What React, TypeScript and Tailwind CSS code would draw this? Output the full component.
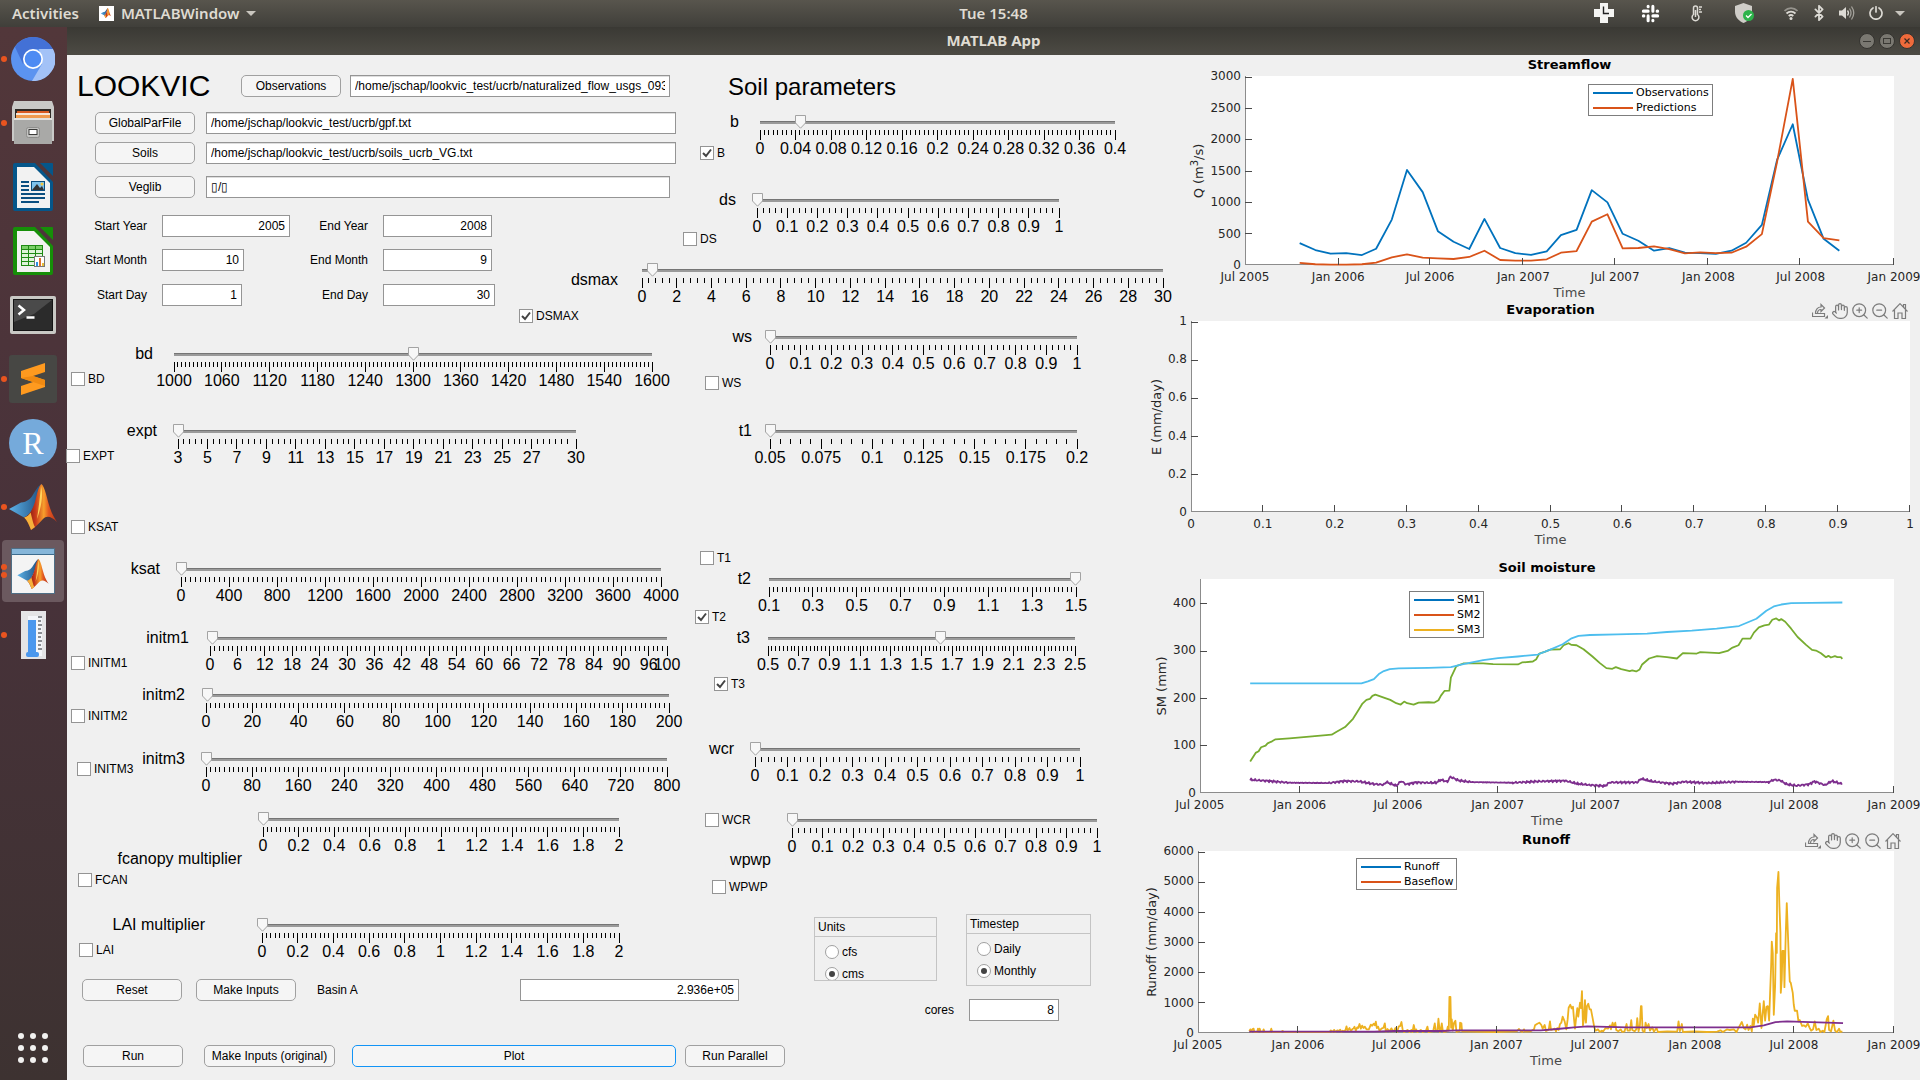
import { useId, useState } from "react";
import type { ReactNode } from "react";
import { Bluetooth, Hand, ZoomIn, ZoomOut } from "lucide-react";

/* ------------------------------------------------------------------ */
/* Icons                                                               */
/* ------------------------------------------------------------------ */

function MatlabLogo({ className }: { className: string }) {
  const id = useId();
  return (
    <svg viewBox="0 0 48 46" className={className} aria-hidden="true">
      <defs>
        <linearGradient id={`${id}a`} x1="0" y1="0" x2="1" y2="0">
          <stop offset="0" stopColor="#5a0f0c" />
          <stop offset="0.35" stopColor="#c8391a" />
          <stop offset="0.6" stopColor="#f7a02c" />
          <stop offset="0.75" stopColor="#e2561f" />
          <stop offset="1" stopColor="#b5341a" />
        </linearGradient>
        <linearGradient id={`${id}b`} x1="0" y1="0" x2="1" y2="0">
          <stop offset="0" stopColor="#5db2e8" />
          <stop offset="1" stopColor="#1d4f80" />
        </linearGradient>
      </defs>
      <path d="M0 25 L12 18.500 C18 18 22 15 25 9 C28 4 30 1 32.500 0 L26 20 C23 27 20 32 15 33.500 Z" fill={`url(#${id}b)`} />
      <path d="M32.500 0 C36 3 38 15 41 24 C43 30 45.500 34 48 38 C43 33 38 31 34 35 C30 39 26 44 22 46 C20 41 18 36 15 33.500 C20 32 23 27 26 18 C28 10 29.500 2 32.500 0 Z" fill={`url(#${id}a)`} />
      <path d="M22 46 C20 41 18 36 15 33.500 C18 33 20 31 21.500 28.500 C23 33 24 40 26 43 Z" fill="#f6b13c" />
      <path d="M32 2 C35 12 31 27 28 35 C30 22 31 12 32 2 Z" fill="#ffd45c" />
    </svg>
  );
}

function ChromiumIcon() {
  return (
    <svg viewBox="0 0 44 44" className="size-11" aria-hidden="true">
      <circle cx="22" cy="22" r="22" fill="#5b93f0" />
      <path d="M22 0 A22 22 0 0 1 42 12 L22 12 L12 27 L4 10 A22 22 0 0 1 22 0 Z" fill="#4371d6" />
      <path d="M42 12 A22 22 0 0 1 21 44 L31 27 L28 12 Z" fill="#a3c2f7" />
      <circle cx="22" cy="22" r="10" fill="#fff" />
      <circle cx="22" cy="22" r="8.300" fill="#4e8bf3" />
    </svg>
  );
}

function FilesIcon() {
  return (
    <svg viewBox="0 0 42 44" className="h-11 w-[42px]" aria-hidden="true">
      <path d="M2 0 H40 L42 6 V40 H0 V6 Z" fill="#c9c9c7" />
      <rect x="3" y="8" width="36" height="12" fill="#2e2a26" />
      <rect x="5" y="10" width="32" height="3" fill="#d95b22" />
      <rect x="4" y="12" width="34" height="2" fill="#f6e6d8" />
      <rect x="4" y="14" width="34" height="5" fill="#f09a4e" />
      <rect x="2" y="17" width="38" height="26" fill="#a9a9a7" />
      <rect x="2" y="17" width="38" height="2" fill="#e2e2e0" />
      <rect x="14.500" y="26.500" width="13" height="10" rx="2" fill="#c4c4c2" stroke="#8e8e8c" />
      <rect x="17" y="28.500" width="8" height="5" fill="#fff" stroke="#3c3c3a" />
    </svg>
  );
}

function WriterIcon() {
  return (
    <svg viewBox="0 0 40 48" className="h-12 w-10" aria-hidden="true">
      <path d="M2 0 H22 L40 19 V46 Q40 48 38 48 H2 Q0 48 0 46 V2 Q0 0 2 0 Z" fill="#05568a" />
      <path d="M27 0 H39 Q40 0 40 1 V13 Z" fill="#05568a" />
      <path d="M4 4 H21 L37 20 V45 H4 Z" fill="#f2f2f2" />
      <path d="M8 19 h8 M8 23 h8 M8 27 h8 M8 31 h24 M8 35 h24 M8 39 h18" stroke="#0b4f80" strokeWidth="2" />
      <rect x="18.500" y="18.500" width="13" height="9" fill="#7fc3ec" stroke="#0b4f80" />
      <path d="M19 27 L24 21 L27 25 L29 23 L31 27 Z" fill="#333" />
      <circle cx="29" cy="21" r="1.500" fill="#f5c63c" />
    </svg>
  );
}

function CalcIcon() {
  return (
    <svg viewBox="0 0 40 48" className="h-12 w-10" aria-hidden="true">
      <path d="M2 0 H22 L40 19 V46 Q40 48 38 48 H2 Q0 48 0 46 V2 Q0 0 2 0 Z" fill="#168f08" />
      <path d="M27 0 H39 Q40 0 40 1 V13 Z" fill="#168f08" />
      <path d="M4 4 H21 L37 20 V45 H4 Z" fill="#f2f2f2" />
      <rect x="8.500" y="18.500" width="21" height="20" fill="#dff3da" stroke="#1f8a14" />
      <rect x="9" y="19" width="20" height="3" fill="#7ad068" />
      <path d="M15.500 18 V38 M22.500 18 V38 M8 22.500 H30 M8 26.500 H30 M8 30.500 H30 M8 34.500 H30" stroke="#1f8a14" />
      <rect x="21.500" y="29.500" width="10" height="10" fill="#fff" stroke="#777" />
      <path d="M24 39 v-4" stroke="#2f8fe0" strokeWidth="2" />
      <path d="M27 39 v-8" stroke="#e0702f" strokeWidth="2" />
      <path d="M30 39 v-3" stroke="#e8bd3a" strokeWidth="2" />
    </svg>
  );
}

function TerminalIcon() {
  return (
    <svg viewBox="0 0 46 38" className="h-[38px] w-[46px]" aria-hidden="true">
      <rect width="46" height="38" rx="2" fill="#c8c8c4" />
      <rect x="3.500" y="3.500" width="39" height="31" fill="#2b2b2b" stroke="#141414" />
      <path d="M4 4 H42 L24 18 L4 26 Z" fill="#4a4a4a" />
      <path d="M8.500 9.500 L14 14 L8.500 18.500" fill="none" stroke="#fff" strokeWidth="2.500" />
      <path d="M16.500 21.500 h8" stroke="#fff" strokeWidth="2.500" />
    </svg>
  );
}

function SublimeIcon() {
  return (
    <svg viewBox="0 0 48 48" className="size-12" aria-hidden="true">
      <rect width="48" height="48" rx="3" fill="#474744" />
      <path d="M36 8 V17 L24 21 L36 25 V32 L12 40 V31 L24 27 L12 23 V16 Z" fill="#ff9a1f" />
      <path d="M24 21 L36 25 V31 L24 27 L12 23 Z" fill="#f08a12" />
    </svg>
  );
}

function MatlabWindowIcon() {
  return (
    <span className="flex h-[46px] w-11 flex-col border border-[#4f6f86] bg-[#f4f4f4]">
      <span className="h-1.5 border-b border-[#3d6c8e] bg-[#86b6d9]" />
      <span className="flex flex-1 items-center justify-center">
        <MatlabLogo className="h-[30px] w-8" />
      </span>
    </span>
  );
}

function GaugeIcon() {
  return (
    <svg viewBox="0 0 25 48" className="h-12 w-[25px]" aria-hidden="true">
      <rect width="25" height="48" fill="#e4e4e6" />
      <rect x="7" y="5" width="14" height="40" fill="#f4f6fa" />
      <rect x="7" y="9" width="8" height="37" fill="#4a97ee" />
      <rect x="5" y="41" width="13" height="5" rx="2" fill="#4a97ee" />
      <path d="M17 6 h4 M17 10 h3 M17 14 h4 M17 18 h3 M17 22 h4 M17 26 h3 M17 30 h4 M17 34 h3 M17 38 h4" stroke="#8a8d92" strokeWidth="2" />
    </svg>
  );
}

function HomeGlyph() {
  return (
    <svg viewBox="0 0 16 16" className="size-4" fill="none" stroke="currentColor" strokeWidth="1.200" aria-hidden="true">
      <path d="M0.500 8.500 L8 0.700 L15.500 8.500 M11.500 4 V1.500 H13.500 V6" />
      <path d="M2.500 7 V15.500 H6 V10 H10 V15.500 H13.500 V7" />
    </svg>
  );
}

function ExportGlyph() {
  return (
    <svg viewBox="0 0 16 16" className="size-4" fill="none" stroke="currentColor" strokeWidth="1.200" aria-hidden="true">
      <path d="M3.500 10.500 C3.500 6 6 4 9 4 V1.500 L12.500 5 L9 8.500 V6.500 C7 6.500 5.500 8 5.500 10.500 Z" />
      <path d="M0.500 9.500 V13.500 H12.500 V10.500 H6" />
      <path d="M16 12 V15.500 H12.500 Z" fill="currentColor" stroke="none" />
    </svg>
  );
}

function StatusIcons() {
  return (
    <div className="flex items-center text-[#dcdad4]">
      <svg viewBox="0 0 20 20" className="mr-[27px] size-5" aria-hidden="true">
        <path d="M6 0 H14 V6 H20 V14 H14 V20 H6 V14 H0 V6 H6 Z" fill="#f5f5f3" />
        <path d="M9.500 3.500 V10.500 H15" fill="none" stroke="#222" strokeWidth="1.400" />
      </svg>
      <svg viewBox="0 0 20 20" className="mr-[31px] size-[19px]" fill="none" stroke="#fff" strokeWidth="3.200" strokeLinecap="round" aria-hidden="true">
        <path d="M2.500 7.500 H7.500 M12.500 2.500 V7.500 M12.500 12.500 H17.500 M7.500 12.500 V17.500" />
        <path d="M7.500 2.500 V3 M17 7.500 H17.500 M12.500 17 V17.500 M2.500 12.500 H3" />
      </svg>
      <svg viewBox="0 0 11 17" className="mr-[33px] h-[17px] w-[11px]" fill="none" stroke="currentColor" strokeWidth="1.500" aria-hidden="true">
        <path d="M2.500 9.500 V3 A2 2 0 0 1 6.500 3 V9.500 A3.400 3.400 0 1 1 2.500 9.500 Z M4.500 5 V12" />
        <path d="M8 2 h3 M8 4.500 h2 M8 7 h3" />
      </svg>
      <svg viewBox="0 0 19 20" className="mr-[30px] h-5 w-[19px]" aria-hidden="true">
        <path d="M8.500 0 L17 3 V9 C17 14 13 18 8.500 20 C4 18 0 14 0 9 V3 Z" fill="#cfcdc8" />
        <circle cx="13.500" cy="12.500" r="5.500" fill="#2cb34a" />
        <path d="M11 12.500 l2 2 l3.500 -3.500" stroke="#fff" fill="none" strokeWidth="1.300" />
      </svg>
      <svg viewBox="0 0 14 13" className="mr-4 h-[13px] w-3.5" fill="none" stroke="currentColor" strokeWidth="1.800" aria-hidden="true">
        <path d="M0.500 4 A9 9 0 0 1 13.500 4" opacity="0.500" />
        <path d="M2.500 6.500 A6.500 6.500 0 0 1 11.500 6.500 M4.700 9 A3.500 3.500 0 0 1 9.300 9" />
        <circle cx="7" cy="11.500" r="1.500" fill="currentColor" stroke="none" />
      </svg>
      <Bluetooth className="mr-[15px] h-4 w-2.5" strokeWidth={2.5} viewBox="5 1 14 22" />
      <svg viewBox="0 0 16 14" className="mr-3.5 h-3.5 w-4" fill="none" stroke="currentColor" strokeWidth="1.300" aria-hidden="true">
        <path d="M0 4.500 H3 L7 1 V13 L3 9.500 H0 Z" fill="currentColor" stroke="none" />
        <path d="M8.500 4.500 Q10.500 7 8.500 9.500" />
        <path d="M10.500 2.500 Q13.500 7 10.500 11.500 M12.500 0.500 Q17 7 12.500 13.500" opacity="0.600" />
      </svg>
      <svg viewBox="0 0 14 14" className="mr-3 size-3.5" fill="none" stroke="currentColor" strokeWidth="1.700" strokeLinecap="round" aria-hidden="true">
        <path d="M4 2 A6 6 0 1 0 10 2 M7 0.800 V6" />
      </svg>
      <Caret />
    </div>
  );
}

function Caret() {
  return (
    <svg viewBox="0 0 10 5" className="h-[5px] w-2.5" fill="#c9c6bf" aria-hidden="true">
      <path d="M0 0 H10 L5 5 Z" />
    </svg>
  );
}

/* ------------------------------------------------------------------ */
/* Desktop chrome                                                      */
/* ------------------------------------------------------------------ */

function TopBar() {
  return (
    <header className="grid h-[27px] grid-cols-[1fr_auto_1fr] items-start bg-linear-to-b from-[#58554d] to-[#403f3a] font-['Noto_Sans','Open_Sans',sans-serif] text-[15px] leading-[26px] font-semibold text-[#dfdbd2]">
      <div className="flex items-center pl-3">
        <button className="font-semibold">Activities</button>
        <button className="ml-5 flex items-center gap-[7px] font-semibold">
          <span className="flex h-[15px] w-[15px] items-center justify-center bg-white">
            <MatlabLogo className="h-2.5 w-3" />
          </span>
          MATLABWindow
          <Caret />
        </button>
      </div>
      <button className="ml-[67px] font-semibold">Tue 15:48</button>
      <div className="flex h-[26px] items-center justify-end pr-[15px]">
        <StatusIcons />
      </div>
    </header>
  );
}

function DockItem({ label, dots = 0, active = false, children }: { label: string; dots?: number; active?: boolean; children: ReactNode }) {
  return (
    <li className="flex h-16 items-center">
      <span className="flex w-2 flex-col items-end gap-0.5 pr-px">
        {Array.from({ length: dots }, (_, i) => (
          <span key={i} className="z-10 size-1.5 rounded-full bg-[#e9541f]" />
        ))}
      </span>
      <button
        aria-label={label}
        className={active ? "-ml-1.5 flex h-[62px] w-[62px] items-center justify-center rounded-sm bg-[#6b595f]" : "-ml-1.5 flex h-[62px] w-[62px] items-center justify-center"}
      >
        {children}
      </button>
    </li>
  );
}

function Dock() {
  return (
    <nav aria-label="Dock" className="flex w-[67px] shrink-0 flex-col justify-between bg-linear-to-b from-[#52373a] via-[#48323a] to-[#3d3231]">
      <ul>
        <DockItem label="Chromium" dots={1}><ChromiumIcon /></DockItem>
        <DockItem label="Files" dots={1}><FilesIcon /></DockItem>
        <DockItem label="Writer"><WriterIcon /></DockItem>
        <DockItem label="Calc"><CalcIcon /></DockItem>
        <DockItem label="Terminal"><TerminalIcon /></DockItem>
        <DockItem label="Sublime Text" dots={1}><SublimeIcon /></DockItem>
        <DockItem label="RStudio">
          <span className="flex size-12 items-center justify-center rounded-full bg-[#75aadb] font-['Liberation_Serif',serif] text-[32px] text-white">R</span>
        </DockItem>
        <DockItem label="MATLAB" dots={1}><MatlabLogo className="h-[46px] w-12" /></DockItem>
        <DockItem label="MATLAB Window" dots={2} active><MatlabWindowIcon /></DockItem>
        <DockItem label="Gauge" dots={1}><GaugeIcon /></DockItem>
      </ul>
      <button aria-label="Show applications" className="mb-[17px] ml-[18px] grid w-[30px] grid-cols-3 gap-1.5">
        {Array.from({ length: 9 }, (_, i) => (
          <span key={i} className="size-1.5 rounded-full bg-[#f2f1f0]" />
        ))}
      </button>
    </nav>
  );
}

function TitleBar() {
  return (
    <div className="grid h-7 grid-cols-[1fr_auto_1fr] bg-linear-to-b from-[#3a3934] to-[#4d4b44]">
      <span />
      <h1 className="font-['Noto_Sans','Open_Sans',sans-serif] text-[15px] leading-[26px] font-bold text-[#dfdbd2]">MATLAB App</h1>
      <div className="flex items-center justify-end gap-1 pr-[5px]">
        <button aria-label="Minimize" className="flex size-4 items-center justify-center rounded-full border border-[#34332f] bg-[#7a7871]">
          <svg viewBox="0 0 8 8" className="size-2" stroke="#3a3934" aria-hidden="true"><path d="M0 4.500 H8" /></svg>
        </button>
        <button aria-label="Maximize" className="flex size-4 items-center justify-center rounded-full border border-[#34332f] bg-[#7a7871]">
          <svg viewBox="0 0 8 8" className="size-2" fill="none" stroke="#3a3934" aria-hidden="true"><rect x="0.500" y="1.500" width="7" height="5" /></svg>
        </button>
        <button aria-label="Close" className="flex size-4 items-center justify-center rounded-full border border-[#34332f] bg-[#ef6a3b]">
          <svg viewBox="0 0 8 8" className="size-2" stroke="#3a2a22" strokeWidth="1.200" aria-hidden="true"><path d="M1.500 1.500 L6.500 6.500 M6.500 1.500 L1.500 6.500" /></svg>
        </button>
      </div>
    </div>
  );
}

/* ------------------------------------------------------------------ */
/* Form controls                                                       */
/* ------------------------------------------------------------------ */

function PushButton({ children, className }: { children: ReactNode; className: string }) {
  return (
    <button className={`h-[22px] shrink-0 rounded-[5px] border bg-[#f5f5f5] text-[12px] leading-5 whitespace-nowrap ${className}`}>{children}</button>
  );
}

const GREY_BORDER = "border-[#a0a0a0]";

function TextField({ label, value, className }: { label: string; value: string; className: string }) {
  return (
    <input
      aria-label={label}
      defaultValue={value}
      className={`h-[22px] min-w-0 border border-[#959595] bg-white px-1 text-[12px] leading-5 shadow-[inset_0_1px_0_#dedede] outline-none ${className}`}
    />
  );
}

function NumberField({ label, value, width }: { label: string; value: string; width: string }) {
  const id = useId();
  return (
    <>
      <label htmlFor={id} className="text-right text-[12px] whitespace-nowrap">{label}</label>
      <input
        id={id}
        inputMode="decimal"
        defaultValue={value}
        className={`h-[22px] border border-[#959595] bg-white px-1 text-right text-[12px] leading-5 outline-none ${width}`}
      />
    </>
  );
}

function Check({ label, checked = false, className = "" }: { label: string; checked?: boolean; className?: string }) {
  return (
    <label className={`flex h-3.5 items-center gap-[3px] text-[12px] leading-[14px] ${className}`}>
      <span className="grid size-3.5 shrink-0 place-items-center">
        <input type="checkbox" defaultChecked={checked} className="peer col-start-1 row-start-1 size-3.5 appearance-none border border-[#949494] bg-white" />
        <svg viewBox="0 0 12 12" className="pointer-events-none invisible col-start-1 row-start-1 size-3 peer-checked:visible" fill="none" stroke="#444" strokeWidth="2" aria-hidden="true">
          <path d="M2 6 L5 9 L10 2.500" />
        </svg>
      </span>
      {label}
    </label>
  );
}

function Radio({ name, label, checked = false }: { name: string; label: string; checked?: boolean }) {
  return (
    <label className="flex h-3.5 items-center gap-[3px] text-[12px] leading-[14px]">
      <span className="grid size-3.5 shrink-0 place-items-center">
        <input type="radio" name={name} defaultChecked={checked} className="peer col-start-1 row-start-1 size-3.5 appearance-none rounded-full border border-[#a0a0a0] bg-white" />
        <span className="pointer-events-none invisible col-start-1 row-start-1 size-1.5 rounded-full bg-[#444] peer-checked:visible" />
      </span>
      {label}
    </label>
  );
}

type ScaleSpec = { name: string; min: number; max: number; major: number; divisions: number; value: number; lastMajor?: number };

function range(from: number, to: number, step: number) {
  const count = Math.floor((to - from) / step + 1e-6);
  return Array.from({ length: count + 1 }, (_, i) => Number((from + i * step).toFixed(5)));
}

/* Ruler slider: track with pointer, tick marks and values below. */
function Scale({ name, min, max, major, divisions, value, lastMajor, className }: ScaleSpec & { className: string }) {
  const [current, setCurrent] = useState(value);
  const at = (v: number) => `${((v - min) / (max - min)) * 100}%`;
  const minorStep = major / divisions;
  const majors = range(min, lastMajor ?? max, major);
  if (majors[majors.length - 1] !== max) majors.push(max);
  const minors = range(min, max, minorStep).filter((v) => max - v > minorStep * 0.6);
  return (
    <div className={`relative h-[42px] min-w-0 flex-1 ${className}`}>
      <div className="pt-1.5">
        <div className="h-[3px] border-t border-[#757575] bg-[#9a9a9a]" />
      </div>
      <svg className="mt-1.5 block h-2.5 w-full overflow-visible" stroke="#000" shapeRendering="crispEdges" aria-hidden="true">
        {minors.map((v) => (
          <line key={v} x1={at(v)} x2={at(v)} y1="0" y2="5" />
        ))}
        {majors.map((v) => (
          <line key={v} x1={at(v)} x2={at(v)} y1="0" y2="10" />
        ))}
      </svg>
      {majors.map((v) => (
        <span key={v} className="absolute top-[26px] -translate-x-1/2 text-[16px] leading-4" style={{ left: at(v) }}>{v}</span>
      ))}
      <svg viewBox="0 0 11 14" className="absolute top-0 -ml-[5px] h-3.5 w-[11px]" style={{ left: at(current) }} aria-hidden="true">
        <path d="M0.500 0.500 H10.500 V8 L5.500 13.200 L0.500 8 Z" fill="#f7f7f7" stroke="#a3a3a3" />
      </svg>
      <input
        type="range"
        aria-label={name}
        min={min}
        max={max}
        step="any"
        value={current}
        onChange={(e) => setCurrent(Number(e.target.value))}
        className="absolute top-0 left-0 h-3.5 w-full appearance-none bg-transparent opacity-0"
      />
    </div>
  );
}

function Name({ children, className }: { children: ReactNode; className: string }) {
  return <span className={`block text-right text-[16px] leading-[14px] whitespace-nowrap ${className}`}>{children}</span>;
}

/* One parameter: names and tick boxes on the left, its ruler on the right. */
function Param({ side, sideClass, scale, scaleClass, className }: { side: ReactNode; sideClass: string; scale: ScaleSpec; scaleClass: string; className: string }) {
  return (
    <div className={`flex items-start ${className}`}>
      <div className={`shrink-0 ${sideClass}`}>{side}</div>
      <Scale {...scale} className={scaleClass} />
    </div>
  );
}

/* ------------------------------------------------------------------ */
/* Control panel                                                       */
/* ------------------------------------------------------------------ */

function FileSettings() {
  return (
    <section aria-label="Files">
      <div className="mt-5 flex h-[22px] items-center pl-2.5">
        <h2 className="w-41 text-[30px] leading-[22px]">LOOKVIC</h2>
        <PushButton className={`w-25 ${GREY_BORDER}`}>Observations</PushButton>
        <TextField label="Observations file" value="/home/jschap/lookvic_test/ucrb/naturalized_flow_usgs_093" className="mr-2.5 ml-[9px] flex-1" />
      </div>
      <div className="mt-[15px] flex pl-7">
        <PushButton className={`w-25 ${GREY_BORDER}`}>GlobalParFile</PushButton>
        <TextField label="Global parameter file" value="/home/jschap/lookvic_test/ucrb/gpf.txt" className="mr-1 ml-[11px] flex-1" />
      </div>
      <div className="mt-2 flex pl-7">
        <PushButton className={`w-25 ${GREY_BORDER}`}>Soils</PushButton>
        <TextField label="Soils file" value="/home/jschap/lookvic_test/ucrb/soils_ucrb_VG.txt" className="mr-1 ml-[11px] flex-1" />
      </div>
      <div className="mt-3 flex pl-7">
        <PushButton className={`w-25 ${GREY_BORDER}`}>Veglib</PushButton>
        <TextField label="Vegetation library" value="▯/▯" className="mr-2.5 ml-[11px] flex-1" />
      </div>
      <div className="mt-[17px] grid grid-cols-[80px_128px_63px_112px] items-center gap-x-[15px]">
        <NumberField label="Start Year" value="2005" width="w-32" />
        <NumberField label="End Year" value="2008" width="w-[109px]" />
      </div>
    </section>
  );
}

function DateSettings() {
  return (
    <section aria-label="Dates" className="grid grid-cols-[80px_128px_63px_112px] content-start items-center gap-x-[15px] gap-y-[13px] pt-[3px]">
      <NumberField label="Start Month" value="10" width="w-[82px]" />
      <NumberField label="End Month" value="9" width="w-[109px]" />
      <NumberField label="Start Day" value="1" width="w-[80px]" />
      <NumberField label="End Day" value="30" width="w-28" />
    </section>
  );
}

function ControlPanel() {
  return (
    <div className="min-w-0 pb-[13px]">
      <div className="grid grid-cols-[613fr_470fr]">
        <FileSettings />
        <section aria-label="Soil parameters">
          <h2 className="mt-5 ml-12 text-[24px] leading-6">Soil parameters</h2>
          <Param
            className="mt-4"
            sideClass="w-20"
            side={<><Name className="mr-[21px]">b</Name><Check label="B" checked className="mt-[17px] ml-5" /></>}
            scale={{ name: "b", min: 0, max: 0.4, major: 0.04, divisions: 8, value: 0.045 }}
            scaleClass="mr-[35px]"
          />
          <Param
            className="mt-[33px]"
            sideClass="w-[77px]"
            side={<><Name className="mr-[21px]">ds</Name><Check label="DS" className="mt-[25px] ml-[3px]" /></>}
            scale={{ name: "ds", min: 0, max: 1, major: 0.1, divisions: 5, value: 0 }}
            scaleClass="mr-[91px]"
          />
        </section>
      </div>

      <div className="grid grid-cols-[448fr_635fr]">
        <DateSettings />
        <Param
          className="mt-[17px]"
          sideClass="w-[127px]"
          side={<><Name className="mt-2.5 mr-6">dsmax</Name><Check label="DSMAX" checked className="mt-[22px] ml-1" /></>}
          scale={{ name: "dsmax", min: 0, max: 30, major: 2, divisions: 5, value: 0.55 }}
          scaleClass="-mr-[13px]"
        />
      </div>

      <div className="grid grid-cols-[613fr_470fr]">
        <section aria-label="Storage parameters">
          <Param
            className="mt-6"
            sideClass="w-[107px]"
            side={<><Name className="mr-[21px]">bd</Name><Check label="BD" className="mt-[11px] ml-1" /></>}
            scale={{ name: "bd", min: 1000, max: 1600, major: 60, divisions: 12, value: 1300 }}
            scaleClass="mr-7"
          />
          <Param
            className="mt-[35px]"
            sideClass="w-[111px]"
            side={<><Name className="mr-[21px]">expt</Name><Check label="EXPT" className="mt-[11px] -ml-px" /></>}
            scale={{ name: "expt", min: 3, max: 30, major: 2, divisions: 5, value: 3, lastMajor: 27 }}
            scaleClass="mr-[104px]"
          />
          <Check label="KSAT" className="mt-[54px] ml-1" />
          <Param
            className="mt-7"
            sideClass="w-[114px]"
            side={<Name className="mr-[21px]">ksat</Name>}
            scale={{ name: "ksat", min: 0, max: 4000, major: 400, divisions: 10, value: 0 }}
            scaleClass="mr-[19px]"
          />
          <Param
            className="mt-[27px]"
            sideClass="w-[143px]"
            side={<><Name className="mr-[21px]">initm1</Name><Check label="INITM1" className="mt-[11px] ml-1" /></>}
            scale={{ name: "initm1", min: 0, max: 100, major: 6, divisions: 6, value: 0.4 }}
            scaleClass="mr-[13px]"
          />
          <Param
            className="mt-[15px]"
            sideClass="w-[139px]"
            side={<><Name className="mr-[21px]">initm2</Name><Check label="INITM2" className="mt-[7px] ml-1" /></>}
            scale={{ name: "initm2", min: 0, max: 200, major: 20, divisions: 10, value: 0.4 }}
            scaleClass="mr-[11px]"
          />
          <Param
            className="mt-[22px]"
            sideClass="w-[139px]"
            side={
              <div className="flex items-start justify-between">
                <Check label="INITM3" className="mt-2.5 ml-2.5" />
                <Name className="mr-[21px]">initm3</Name>
              </div>
            }
            scale={{ name: "initm3", min: 0, max: 800, major: 80, divisions: 10, value: 0 }}
            scaleClass="mr-[13px]"
          />
          <Param
            className="mt-[18px]"
            sideClass="w-49"
            side={<><Name className="mt-10 mr-[21px]">fcanopy multiplier</Name><Check label="FCAN" className="mt-[7px] ml-[11px]" /></>}
            scale={{ name: "fcanopy multiplier", min: 0, max: 2, major: 0.2, divisions: 8, value: 0 }}
            scaleClass="mr-[61px]"
          />
        </section>

        <section aria-label="Layer parameters">
          <Param
            className="mt-[7px]"
            sideClass="w-[90px]"
            side={<><Name className="mr-[18px]">ws</Name><Check label="WS" className="mt-8 ml-[25px]" /></>}
            scale={{ name: "ws", min: 0, max: 1, major: 0.1, divisions: 5, value: 0 }}
            scaleClass="mr-[73px]"
          />
          <Param
            className="mt-[34px]"
            sideClass="w-[90px]"
            side={<Name className="mr-[18px]">t1</Name>}
            scale={{ name: "t1", min: 0.05, max: 0.2, major: 0.025, divisions: 5, value: 0.05 }}
            scaleClass="mr-[73px]"
          />
          <Check label="T1" className="mt-[85px] ml-5" />
          <Param
            className="mt-[7px]"
            sideClass="w-[89px]"
            side={<><Name className="mr-[18px]">t2</Name><Check label="T2" checked className="mt-6 ml-[15px]" /></>}
            scale={{ name: "t2", min: 0.1, max: 1.5, major: 0.2, divisions: 10, value: 1.495 }}
            scaleClass="mr-[74px]"
          />
          <Param
            className="mt-[7px]"
            sideClass="w-[88px]"
            side={<><Name className="mr-[18px]">t3</Name><Check label="T3" checked className="mt-8 ml-[34px]" /></>}
            scale={{ name: "t3", min: 0.5, max: 2.5, major: 0.2, divisions: 8, value: 1.62 }}
            scaleClass="mr-[75px]"
          />
          <Param
            className="mt-[51px]"
            sideClass="w-[75px]"
            side={<Name className="mr-[21px]">wcr</Name>}
            scale={{ name: "wcr", min: 0, max: 1, major: 0.1, divisions: 5, value: 0 }}
            scaleClass="mr-[70px]"
          />
          <Param
            className="mt-[29px]"
            sideClass="w-28"
            side={
              <>
                <Check label="WCR" className="ml-[25px]" />
                <Name className="mt-[26px] mr-[21px]">wpwp</Name>
                <Check label="WPWP" className="mt-[13px] ml-8" />
              </>
            }
            scale={{ name: "wpwp", min: 0, max: 1, major: 0.1, divisions: 5, value: 0 }}
            scaleClass="mr-[53px]"
          />
        </section>
      </div>

      <div className="grid grid-cols-[700fr_383fr]">
        <section aria-label="Vegetation">
          <Param
            className="mt-6"
            sideClass="w-[195px]"
            side={<><Name className="mr-[57px]">LAI multiplier</Name><Check label="LAI" className="mt-[11px] ml-3" /></>}
            scale={{ name: "LAI multiplier", min: 0, max: 2, major: 0.2, divisions: 8, value: 0 }}
            scaleClass="mr-[148px]"
          />
          <div className="mt-[19px] flex items-center pr-7 pl-[15px]">
            <PushButton className={`w-25 ${GREY_BORDER}`}>Reset</PushButton>
            <PushButton className={`ml-3.5 w-25 ${GREY_BORDER}`}>Make Inputs</PushButton>
            <label htmlFor="basin-area" className="ml-[21px] w-[203px] text-[12px]">Basin A</label>
            <input id="basin-area" defaultValue="2.936e+05" className="h-[22px] min-w-0 flex-1 border border-[#959595] bg-white px-1 text-right text-[12px] leading-5 outline-none" />
          </div>
        </section>
        <section aria-label="Run options" className="pt-5">
          <div className="flex items-start pl-[47px]">
            <div role="radiogroup" aria-label="Units" className="mt-[3px] h-16 w-[123px] overflow-hidden border border-[#c4c4c4]">
              <div className="h-[19px] border-b border-[#c4c4c4] pl-[3px] text-[12px] leading-[18px]">Units</div>
              <div className="flex flex-col gap-2 pt-2 pl-2.5">
                <Radio name="units" label="cfs" />
                <Radio name="units" label="cms" checked />
              </div>
            </div>
            <div role="radiogroup" aria-label="Timestep" className="ml-[29px] h-[72px] w-[125px] border border-[#c4c4c4]">
              <div className="h-[19px] border-b border-[#c4c4c4] pl-[3px] text-[12px] leading-[18px]">Timestep</div>
              <div className="flex flex-col gap-2 pt-2 pl-2.5">
                <Radio name="timestep" label="Daily" />
                <Radio name="timestep" label="Monthly" checked />
              </div>
            </div>
          </div>
          <div className="mt-[13px] grid grid-cols-[187px_90px] items-center gap-x-[15px]">
            <NumberField label="cores" value="8" width="w-[90px]" />
          </div>
        </section>
      </div>

      <div className="mt-6 flex pr-[365px] pl-4">
        <PushButton className={`w-25 ${GREY_BORDER}`}>Run</PushButton>
        <PushButton className={`ml-[21px] w-[131px] ${GREY_BORDER}`}>Make Inputs (original)</PushButton>
        <PushButton className="mr-[9px] ml-[17px] flex-1 border-[#1294f6]">Plot</PushButton>
        <PushButton className={`w-25 ${GREY_BORDER}`}>Run Parallel</PushButton>
      </div>
    </div>
  );
}

/* ------------------------------------------------------------------ */
/* Charts                                                              */
/* ------------------------------------------------------------------ */

const BLUE = "#0072bd";
const ORANGE = "#d95319";
const YELLOW = "#edb120";
const PURPLE = "#7e2f8e";
const GREEN = "#77ac30";
const CYAN = "#4dbeee";

type Tick = { label: string; at: number };
type Trace = { color: string; points: string };
type LegendEntry = { label: string; color: string };

const dateTicks: Tick[] = [
  { label: "Jul 2005", at: 0 },
  { label: "Jan 2006", at: 184 / 1280 },
  { label: "Jul 2006", at: 365 / 1280 },
  { label: "Jan 2007", at: 549 / 1280 },
  { label: "Jul 2007", at: 730 / 1280 },
  { label: "Jan 2008", at: 914 / 1280 },
  { label: "Jul 2008", at: 1096 / 1280 },
  { label: "Jan 2009", at: 1 },
];

function valueTicks(max: number, step: number, end = max): Tick[] {
  return range(0, end, step).map((v) => ({ label: String(v), at: v / max }));
}

/* Streamflow, one value per month, October 2005 to September 2008 */
const observed = [354, 243, 185, 195, 163, 264, 729, 1521, 1167, 544, 375, 259, 739, 275, 195, 164, 222, 480, 565, 1199, 1003, 502, 391, 232, 275, 200, 195, 180, 232, 359, 644, 1680, 2250, 1046, 422, 232];
const predicted = [37, 16, 10, 10, 16, 42, 127, 174, 122, 111, 100, 132, 232, 84, 74, 74, 95, 200, 227, 697, 813, 270, 275, 301, 259, 190, 206, 195, 200, 296, 497, 1648, 2974, 697, 433, 396];

function monthlyPoints(values: number[]) {
  const start = Date.UTC(2005, 6, 1);
  return values
    .map((v, i) => {
      const day = (Date.UTC(2005, 9 + i, 15) - start) / 86400000;
      return `${day},${3000 - v}`;
    })
    .join(" ");
}

/* Daily traces, in the units of each chart's own viewBox */
const sm3 =
  "221,399 445,399 458,393 470,386 480,371 490,362 502,356 520,354 580,352 625,350 650,341 690,329 720,323 760,318 800,312 825,297 850,281 868,263 882,256 905,253 960,251 1020,249 1060,244 1110,240 1160,234 1205,226 1240,204 1260,180 1275,167 1290,161 1310,157 1350,156 1413,155";
const sm2 =
  "221,635 232,609 238,604 243,592 252,587 256,580 265,574 272,568 300,565 340,560 385,554 395,545 412,531 428,506 440,477 447,460 455,449 462,446 467,437 473,433 490,442 503,449 515,459 524,463 531,454 537,459 550,463 560,457 580,456 592,457 600,450 605,436 612,422 622,421 625,382 630,366 636,347 650,339 690,339 710,341 760,342 768,336 790,333 797,326 803,309 815,303 825,297 845,296 852,284 862,278 868,283 878,284 892,296 910,318 925,338 938,353 950,355 957,350 968,356 985,362 990,360 998,363 1005,357 1010,342 1024,324 1040,317 1060,320 1080,324 1092,308 1120,309 1127,305 1165,308 1182,301 1192,291 1204,284 1212,264 1228,264 1235,246 1245,230 1256,224 1265,222 1272,207 1280,203 1286,209 1290,205 1298,213 1310,234 1323,259 1340,283 1352,298 1360,300 1370,308 1380,320 1385,316 1390,321 1398,317 1403,320 1410,320 1413,325";
const sm1Trend: [number, number][] = [
  [221, 690], [260, 694], [300, 699], [380, 700], [410, 694], [440, 695], [470, 703], [490, 705], [495, 697], [515, 708], [525, 694], [535, 704], [555, 698], [575, 699], [595, 699], [605, 690], [618, 696], [624, 681], [640, 692], [665, 697], [750, 699], [800, 695], [855, 693], [880, 702], [905, 706], [935, 709], [945, 698], [975, 698], [1000, 698], [1008, 687], [1030, 695], [1070, 702], [1095, 696], [1140, 700], [1200, 696], [1265, 697], [1275, 690], [1288, 692], [1300, 703], [1320, 708], [1345, 704], [1357, 695], [1378, 706], [1392, 694], [1413, 703],
];

/* Adds small daily wiggle to a coarse trend line. */
function wiggle(trend: [number, number][]) {
  const out: string[] = [];
  let n = 0;
  for (let i = 0; i < trend.length - 1; i++) {
    const [x0, y0] = trend[i];
    const [x1, y1] = trend[i + 1];
    const calm = x1 - x0 > 60 ? 1 : 4;
    for (let x = x0; x < x1; x += 2) {
      n += 1;
      const noise = Math.sin(n * 2.3) * Math.sin(n * 0.71);
      out.push(`${x},${(y0 + ((y1 - y0) * (x - x0)) / (x1 - x0) + noise * calm).toFixed(1)}`);
    }
  }
  return out.join(" ");
}

const runoff =
  "325,636 328,630 331,638 334,630 338,628 340,638 349,638 351,628 354,637 356,628 360,638 366,637 368,630 371,638 388,638 391,628 394,638 420,638 425,635 430,638 566,638 570,633 574,638 580,632 583,638 590,633 594,636 598,631 601,638 606,634 609,636 614,632 617,621 620,634 626,626 630,636 634,630 638,627 641,622 645,634 649,624 652,626 656,614 660,628 664,619 668,626 672,622 677,630 684,630 690,616 694,619 699,613 702,618 705,607 708,626 712,622 716,634 722,628 728,625 732,612 735,637 740,629 746,636 752,627 756,636 760,634 764,626 769,638 774,621 778,620 782,608 786,634 790,638 800,632 806,638 812,632 815,638 819,617 823,636 826,630 830,638 840,632 846,638 855,635 860,622 863,638 873,636 877,636 882,612 885,636 890,634 893,598 897,638 900,632 903,612 906,634 910,638 918,636 921,622 924,634 926,532 929,532 931,625 933,600 936,634 940,610 944,604 947,638 953,636 957,636 958,610 962,612 964,636 1060,638 1128,636 1135,629 1140,636 1145,638 1150,630 1153,637 1170,636 1180,630 1183,618 1190,613 1196,610 1202,617 " +
  "1206,628 1212,617 1216,635 1224,632 1228,606 1231,632 1237,630 1242,628 1246,636 1250,626 1254,632 1258,614 1262,610 1266,592 1272,606 1277,630 1281,600 1284,565 1289,556 1293,567 1297,562 1300,598 1303,628 1306,600 1310,566 1313,592 1318,550 1321,566 1324,515 1327,618 1330,600 1333,542 1336,610 1339,560 1343,553 1347,570 1351,570 1356,596 1361,624 1365,634 1372,630 1378,638 1383,634 1388,636 1395,626 1402,628 1408,618 1411,630 1416,610 1420,622 1424,610 1427,632 1433,636 1440,630 1445,638 1452,636 1458,614 1461,634 1468,634 1472,602 1475,632 1482,636 1487,630 1490,596 1494,636 1498,618 1501,560 1503,560 1506,634 1512,638 1515,610 1519,626 1524,614 1528,634 1535,624 1540,637 1548,626 1552,638 1580,636 1610,637 1614,606 1618,636 1624,614 1627,638 1660,636 1700,638 1730,637 1740,633 1747,638 1760,630 1768,632 1780,630 1788,638 1795,624 1804,608 1810,626 1815,630 1820,616 1824,632 1830,620 1834,636 1837,598 1840,618 1844,586 1850,596 1853,610 1858,552 1863,626 1866,590 1870,545 1874,604 1878,562 1882,560 1886,604 1889,520 1892,440 1894,366 1897,400 1900,586 1904,500 1907,340 1909,400 1910,205 1914,156 1917,260 1920,340 1921,520 1924,480 1926,394 1930,394 1932,503 1936,340 1939,250 1942,330 1946,440 1948,486 1951,490 1957,520 1960,556 1963,574 1970,574 1974,606 1978,602 1985,620 1990,618 1996,622 2002,612 2007,624 2012,634 2018,630 2023,606 2028,632 2035,628 2040,638 2047,634 2052,638 2059,600 2063,590 2066,632 2072,636 2079,604 2084,634 2090,638 2096,628 2100,638 2106,636";
const baseflow =
  "325,637 700,637 760,635 900,635 950,633 1060,633 1200,633 1250,629 1300,624 1340,621 1460,624 1620,624 1830,624 1870,618 1905,608 1940,606 2010,608 2108,611";

function ChartTools({ className }: { className: string }) {
  return (
    <div role="toolbar" aria-label="Chart tools" className={`flex gap-1 justify-self-end text-[#7c7c7c] ${className}`}>
      <button aria-label="Export"><ExportGlyph /></button>
      <button aria-label="Pan"><Hand className="size-4" strokeWidth={1.7} viewBox="1 1 22 22" /></button>
      <button aria-label="Zoom in"><ZoomIn className="size-4" strokeWidth={1.5} viewBox="2 2 20 20" /></button>
      <button aria-label="Zoom out"><ZoomOut className="size-4" strokeWidth={1.5} viewBox="2 2 20 20" /></button>
      <button aria-label="Restore view"><HomeGlyph /></button>
    </div>
  );
}

type ChartProps = {
  title: string;
  yLabel: ReactNode;
  yLabelClass: string;
  xTicks: Tick[];
  yTicks: Tick[];
  viewBox: string;
  traces: Trace[];
  legend?: LegendEntry[];
  legendClass?: string;
  gutter: string;
  height: string;
  tools?: string;
  className: string;
};

function Chart({ title, yLabel, yLabelClass, xTicks, yTicks, viewBox, traces, legend, legendClass = "", gutter, height, tools, className }: ChartProps) {
  return (
    <figure className={`flex font-['DejaVu_Sans',sans-serif] text-[12px] text-[#262626] ${className}`}>
      <div className={`mt-5 flex shrink-0 ${height} ${gutter}`}>
        <div className={`flex w-4 shrink-0 items-center justify-center ${yLabelClass}`}>
          <span className="shrink-0 -rotate-90 text-[13px] leading-4 whitespace-nowrap">{yLabel}</span>
        </div>
        <div className="relative flex-1">
          {yTicks.map((t) => (
            <span key={t.label} className="absolute right-1 -translate-y-1/2 leading-4" style={{ top: `${(1 - t.at) * 100}%` }}>{t.label}</span>
          ))}
        </div>
      </div>
      <div className="min-w-0 flex-1">
        <figcaption className="grid h-4 grid-cols-[1fr_auto_1fr]">
          <span />
          <span className="text-[13px] leading-[18px] font-bold text-black">{title}</span>
          {tools && <ChartTools className={tools} />}
        </figcaption>
        <div className={`relative mt-1 border-b border-l border-[#8c8c8c] bg-white ${height}`}>
          <svg viewBox={viewBox} preserveAspectRatio="none" className="block size-full overflow-visible" fill="none" strokeWidth="1.800" strokeLinejoin="round" role="img" aria-label={`${title} chart`}>
            {traces.map((t) => (
              <polyline key={t.color} points={t.points} stroke={t.color} vectorEffect="non-scaling-stroke" />
            ))}
          </svg>
          <svg className="absolute -bottom-px -left-px size-full overflow-visible" stroke="#4a4a4a" shapeRendering="crispEdges" aria-hidden="true">
            {yTicks.filter((t) => t.at > 0).map((t) => (
              <line key={t.label} x1="0" x2="7" y1={`${(1 - t.at) * 100}%`} y2={`${(1 - t.at) * 100}%`} />
            ))}
            <svg y="100%" overflow="visible">
              {xTicks.filter((t) => t.at > 0).map((t) => (
                <line key={t.label} x1={`${t.at * 100}%`} x2={`${t.at * 100}%`} y1="0" y2="-7" />
              ))}
            </svg>
          </svg>
          {legend && (
            <ul className={`absolute border border-[#7d7d7d] bg-white pr-[3px] pl-1 text-[11px] leading-[15px] text-black ${legendClass}`}>
              {legend.map((e) => (
                <li key={e.label} className="flex items-center gap-[3px]">
                  <svg className="h-0.5 w-10 shrink-0" aria-hidden="true"><rect width="40" height="2" fill={e.color} /></svg>
                  {e.label}
                </li>
              ))}
            </ul>
          )}
        </div>
        <div className="relative mt-1 h-4">
          {xTicks.map((t) => (
            <span key={t.label} className="absolute -translate-x-1/2 leading-4 whitespace-nowrap" style={{ left: `${t.at * 100}%` }}>{t.label}</span>
          ))}
        </div>
        <div className="text-center text-[13px] leading-4 text-[#4a4a4a]">Time</div>
      </div>
    </figure>
  );
}

function Plots() {
  return (
    <div className="min-w-0">
      <Chart
        className="mt-px pr-[26px]"
        title="Streamflow"
        gutter="w-[95px]"
        height="h-[189px]"
        yLabel={<>Q (m<sup className="text-[10px] leading-none">3</sup>/s)</>}
        yLabelClass="ml-[41px]"
        xTicks={dateTicks}
        yTicks={valueTicks(3000, 500)}
        viewBox="0 -20 1280 3000"
        traces={[
          { color: BLUE, points: monthlyPoints(observed) },
          { color: ORANGE, points: monthlyPoints(predicted) },
        ]}
        legend={[{ label: "Observations", color: BLUE }, { label: "Predictions", color: ORANGE }]}
        legendClass="top-2 left-[342px]"
      />
      <Chart
        className="pr-2.5"
        title="Evaporation"
        gutter="w-[41px]"
        height="h-[191px]"
        yLabel="E (mm/day)"
        yLabelClass="-ml-px"
        xTicks={valueTicks(1, 0.1)}
        yTicks={valueTicks(1, 0.2)}
        viewBox="0 0 1 1"
        traces={[]}
        tools="mr-0.5 mt-0.5"
      />
      <Chart
        className="mt-[11px] pr-[26px]"
        title="Soil moisture"
        gutter="w-[50px]"
        height="h-[214px]"
        yLabel="SM (mm)"
        yLabelClass="ml-1"
        xTicks={dateTicks}
        yTicks={valueTicks(450, 100, 400)}
        viewBox="122 84 1395 643"
        traces={[
          { color: PURPLE, points: wiggle(sm1Trend) },
          { color: GREEN, points: sm2 },
          { color: CYAN, points: sm3 },
        ]}
        legend={[{ label: "SM1", color: BLUE }, { label: "SM2", color: ORANGE }, { label: "SM3", color: YELLOW }]}
        legendClass="top-3 left-[208px]"
      />
      <Chart
        className="mt-0.5 pr-[26px]"
        title="Runoff"
        gutter="w-12"
        height="h-[182px]"
        yLabel="Runoff (mm/day)"
        yLabelClass="-ml-1.5"
        xTicks={dateTicks}
        yTicks={valueTicks(6000, 1000)}
        viewBox="174 93 2087 545"
        traces={[
          { color: YELLOW, points: runoff },
          { color: PURPLE, points: baseflow },
        ]}
        legend={[{ label: "Runoff", color: BLUE }, { label: "Baseflow", color: ORANGE }]}
        legendClass="top-[7px] left-[157px]"
        tools="-mr-[7px] mt-0.5"
      />
    </div>
  );
}

/* ------------------------------------------------------------------ */

export default function App() {
  return (
    <div className="flex min-h-screen flex-col overflow-hidden bg-[#f0f0f0] font-['Liberation_Sans',Arial,sans-serif] text-black">
      <TopBar />
      <div className="flex flex-1">
        <Dock />
        <div className="flex min-w-0 flex-1 flex-col">
          <TitleBar />
          <main className="grid flex-1 grid-cols-[1083fr_770fr]">
            <ControlPanel />
            <Plots />
          </main>
        </div>
      </div>
    </div>
  );
}
